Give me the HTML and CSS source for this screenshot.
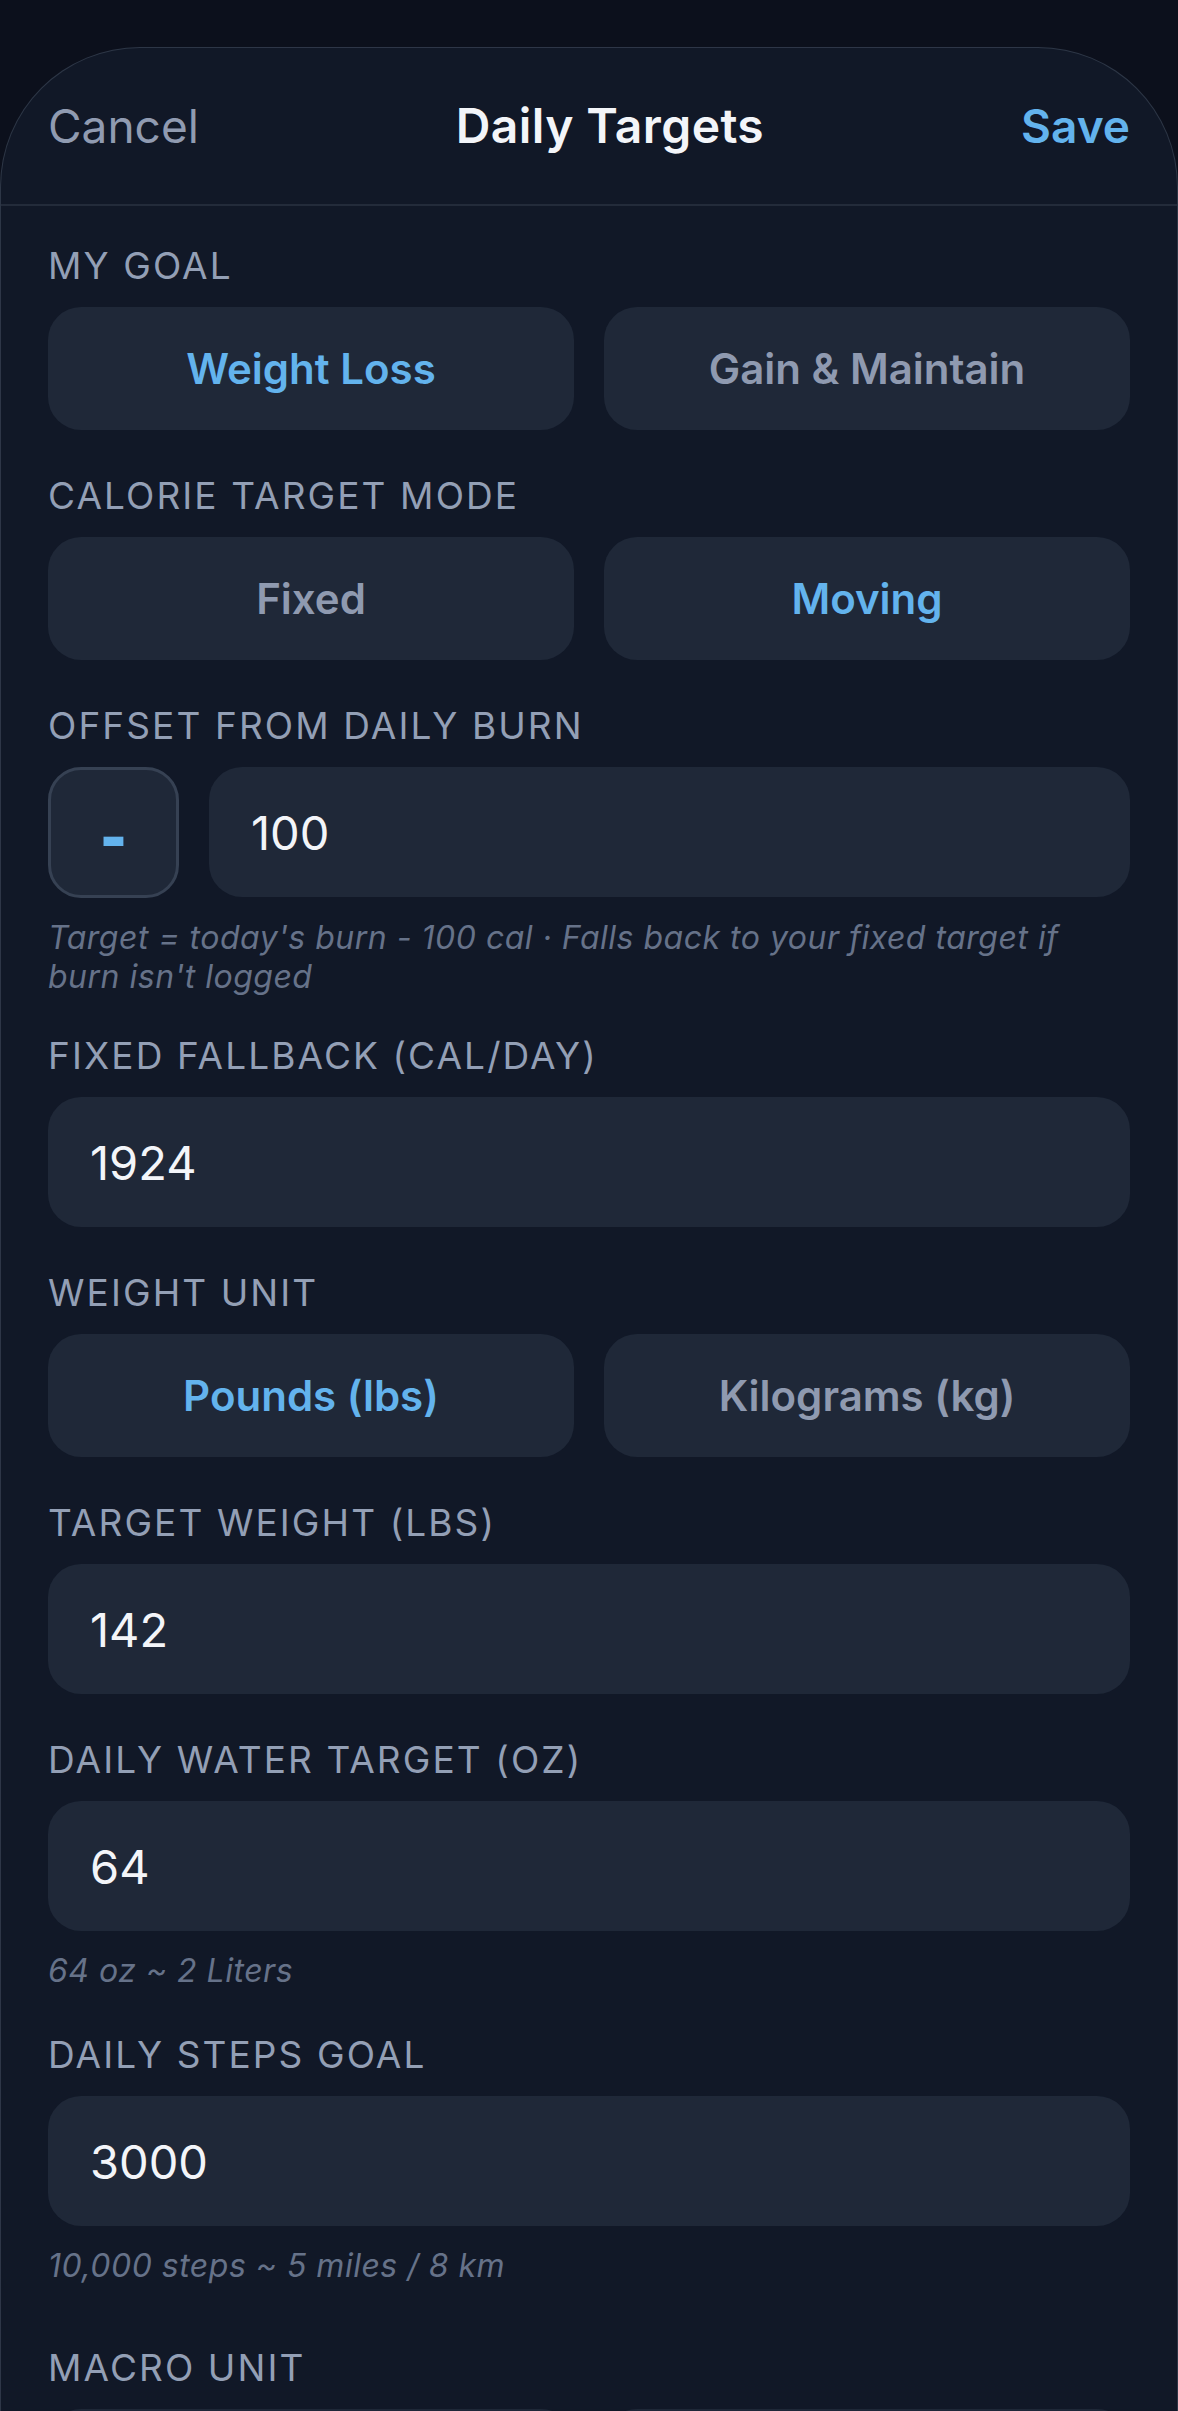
FILE: index.html
```html
<!DOCTYPE html>
<html lang="en">
<head>
<meta charset="utf-8">
<title>Daily Targets</title>
<link rel="stylesheet" href="styles.css">
</head>
<body>
<div class="sheet">
  <header class="nav">
    <span class="nav-btn cancel">Cancel</span>
    <span class="nav-title">Daily Targets</span>
    <span class="nav-btn save">Save</span>
  </header>
  <main class="form">
    <section class="field">
      <div class="label">My Goal</div>
      <div class="seg">
        <div class="opt active">Weight Loss</div>
        <div class="opt">Gain &amp; Maintain</div>
      </div>
    </section>
    <section class="field">
      <div class="label">Calorie Target Mode</div>
      <div class="seg">
        <div class="opt">Fixed</div>
        <div class="opt active">Moving</div>
      </div>
    </section>
    <section class="field">
      <div class="label">Offset from Daily Burn</div>
      <div class="offset-row">
        <div class="sign">-</div>
        <div class="input grow">100</div>
      </div>
      <div class="hint">Target = today's burn - 100 cal · Falls back to your fixed target if burn isn't logged</div>
    </section>
    <section class="field after-hint">
      <div class="label">Fixed Fallback (cal/day)</div>
      <div class="input">1924</div>
    </section>
    <section class="field">
      <div class="label">Weight Unit</div>
      <div class="seg">
        <div class="opt active">Pounds (lbs)</div>
        <div class="opt">Kilograms (kg)</div>
      </div>
    </section>
    <section class="field">
      <div class="label">Target Weight (lbs)</div>
      <div class="input">142</div>
    </section>
    <section class="field">
      <div class="label">Daily Water Target (oz)</div>
      <div class="input">64</div>
      <div class="hint">64 oz ~ 2 Liters</div>
    </section>
    <section class="field after-short-hint">
      <div class="label">Daily Steps Goal</div>
      <div class="input">3000</div>
      <div class="hint">10,000 steps ~ 5 miles / 8 km</div>
    </section>
    <section class="field after-steps">
      <div class="label">Macro Unit</div>
      <div class="seg">
        <div class="opt"></div>
        <div class="opt"></div>
      </div>
    </section>
  </main>
</div>
</body>
</html>
```
FILE: styles.css
```css
* {
  box-sizing: border-box;
}

html, body {
  margin: 0;
  padding: 0;
}

body {
  background: #0c101c;
  font-family: Inter, "Noto Sans", "Liberation Sans", sans-serif;
  color: #f1f5f9;
  overflow: hidden;
  height: 2411px;
}

.sheet {
  margin-top: 47px;
  background: #111827;
  border: 1px solid rgba(148, 163, 184, 0.22);
  border-bottom: none;
  border-radius: 140px 140px 0 0;
  min-height: 2364px;
}

.nav {
  height: 158px;
  padding: 0 47px;
  display: flex;
  align-items: center;
  justify-content: space-between;
  border-bottom: 2px solid #232b3a;
}

.nav-btn,
.nav-title {
  font-size: 46px;
  line-height: 58px;
}

.cancel {
  color: #909bb1;
  font-weight: 400;
}

.nav-title {
  font-size: 48px;
  color: #f3f5f9;
  font-weight: 600;
  letter-spacing: 0.4px;
}

.save {
  color: #63b3ed;
  font-weight: 600;
}

.form {
  padding: 37px 47px 0;
  display: flex;
  flex-direction: column;
}

.field {
  display: flex;
  flex-direction: column;
  gap: 18px;
}

.field + .field {
  margin-top: 43px;
}

.field.after-hint {
  margin-top: 37px;
}

.field.after-short-hint {
  margin-top: 42px;
}

.field.after-steps {
  margin-top: 60px;
}

.label {
  font-size: 37px;
  line-height: 46px;
  text-transform: uppercase;
  letter-spacing: 2.1px;
  color: #939fb5;
}

.seg {
  display: grid;
  grid-template-columns: 1fr 1fr;
  gap: 30px;
}

.opt {
  height: 123px;
  border-radius: 33px;
  background: #1f2838;
  display: flex;
  align-items: center;
  justify-content: center;
  font-size: 42px;
  font-weight: 600;
  color: #8f9ab0;
}

.opt.active {
  color: #63b3ed;
}

.offset-row {
  display: flex;
  gap: 30px;
}

.sign {
  width: 131px;
  height: 131px;
  flex: none;
  border: 3px solid #364153;
  border-radius: 33px;
  background: #1f2838;
  display: flex;
  align-items: center;
  justify-content: center;
  color: #63b3ed;
  font-family: "Liberation Sans", Arial, sans-serif;
  font-weight: 700;
  font-size: 78px;
  line-height: 1;
  padding-top: 4px;
}

.input {
  height: 130px;
  border-radius: 33px;
  background: #1f2838;
  display: flex;
  align-items: center;
  padding: 0 42px;
  font-size: 47px;
  color: #f3f5f9;
}

.grow {
  flex: 1;
}

.hint {
  margin-top: 2px;
  font-size: 32px;
  line-height: 39px;
  letter-spacing: 0.5px;
  font-style: italic;
  color: #667289;
}
```
